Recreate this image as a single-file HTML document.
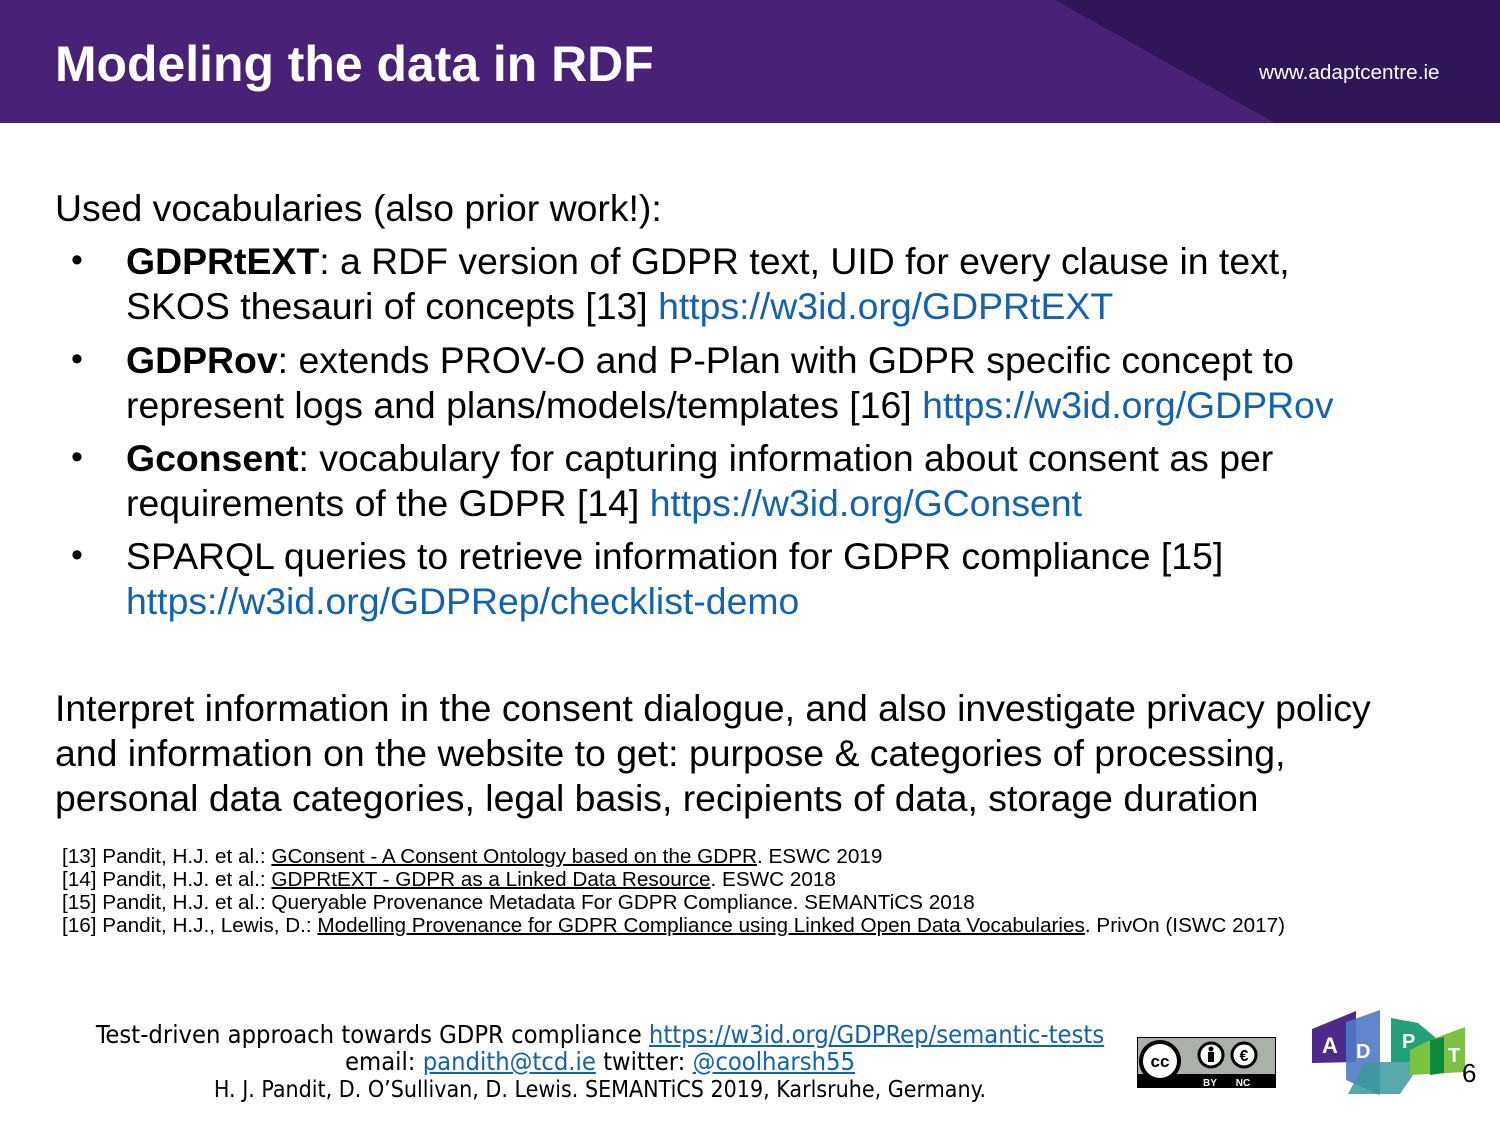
<!DOCTYPE html>
<html><head><meta charset="utf-8"><style>
*{margin:0;padding:0}
body{width:1500px;height:1125px;position:relative;background:#fff;font-family:"Liberation Sans",sans-serif;overflow:hidden;color:#000}
.hdr{position:absolute;left:0;top:0;width:1500px;height:123px;background:#472277}
.t{position:absolute;left:55px;top:35px;font-size:49.9px;font-weight:bold;color:#fff;white-space:nowrap}
.url{position:absolute;left:1259px;top:61px;font-size:20.7px;color:#fff}
.p{position:absolute;font-size:37.4px;white-space:nowrap;line-height:45px}
.b{position:absolute;left:71px;font-size:34px}
.l{color:#1262b3}
.fn{position:absolute;left:62px;font-size:20px;line-height:23px;white-space:nowrap;transform:scaleX(1.035);transform-origin:left}
.ft{position:absolute;left:80px;width:1040px;top:1021px;text-align:center;font-family:"DejaVu Sans Condensed","DejaVu Sans",sans-serif;font-stretch:condensed;font-size:25.3px;line-height:27px;white-space:nowrap}
.ft u{color:#1262b3}
</style></head><body>
<div class="hdr"><svg width="1500" height="123" style="position:absolute;left:0;top:0"><polygon points="1055,0 1500,0 1500,123 1275,123" fill="#2e1659"/></svg></div>
<div class="t">Modeling the data in RDF</div>
<div class="url">www.adaptcentre.ie</div>

<div class="p" style="left:55px;top:186px">Used vocabularies (also prior work!):</div>
<div class="b" style="top:241px">•</div>
<div class="p" style="left:126px;top:239px"><b>GDPRtEXT</b>: a RDF version of GDPR text, UID for every clause in text,<br>SKOS thesauri of concepts [13] <span class="l">https://w3id.org/GDPRtEXT</span></div>
<div class="b" style="top:340px">•</div>
<div class="p" style="left:126px;top:338px"><b>GDPRov</b>: extends PROV-O and P-Plan with GDPR specific concept to<br>represent logs and plans/models/templates [16] <span class="l">https://w3id.org/GDPRov</span></div>
<div class="b" style="top:438px">•</div>
<div class="p" style="left:126px;top:436px"><b>Gconsent</b>: vocabulary for capturing information about consent as per<br>requirements of the GDPR [14] <span class="l">https://w3id.org/GConsent</span></div>
<div class="b" style="top:536px">•</div>
<div class="p" style="left:126px;top:534px">SPARQL queries to retrieve information for GDPR compliance [15]<br><span class="l">https://w3id.org/GDPRep/checklist-demo</span></div>

<div class="p" style="left:55px;top:686px">Interpret information in the consent dialogue, and also investigate privacy policy<br>and information on the website to get: purpose &amp; categories of processing,<br>personal data categories, legal basis, recipients of data, storage duration</div>

<div class="fn" style="top:846px">[13] Pandit, H.J. et al.: <u>GConsent - A Consent Ontology based on the GDPR</u>. ESWC 2019</div>
<div class="fn" style="top:869px">[14] Pandit, H.J. et al.: <u>GDPRtEXT - GDPR as a Linked Data Resource</u>. ESWC 2018</div>
<div class="fn" style="top:892px">[15] Pandit, H.J. et al.: Queryable Provenance Metadata For GDPR Compliance. SEMANTiCS 2018</div>
<div class="fn" style="top:915px">[16] Pandit, H.J., Lewis, D.: <u>Modelling Provenance for GDPR Compliance using Linked Open Data Vocabularies</u>. PrivOn (ISWC 2017)</div>

<div class="ft">Test-driven approach towards GDPR compliance <u>https://w3id.org/GDPRep/semantic-tests</u><br>email: <u>pandith@tcd.ie</u> twitter: <u>@coolharsh55</u><br><span style="font-size:23px">H. J. Pandit, D. O’Sullivan, D. Lewis. SEMANTiCS 2019, Karlsruhe, Germany.</span></div>

<svg style="position:absolute;left:1137px;top:1037px" width="139" height="51">
<rect x="0.5" y="0.5" width="138" height="50" fill="#abb1aa" stroke="#000"/>
<rect x="0" y="37" width="139" height="14" fill="#000"/>
<circle cx="23" cy="24" r="19" fill="#fff" stroke="#000" stroke-width="4"/>
<text x="23" y="30" font-size="17" font-weight="bold" text-anchor="middle" font-family="Liberation Sans">cc</text>
<circle cx="74" cy="18" r="12" fill="#fff" stroke="#000" stroke-width="3"/>
<circle cx="74" cy="12" r="2.5"/><rect x="71" y="15" width="6" height="10"/>
<circle cx="107" cy="18" r="12" fill="#fff" stroke="#000" stroke-width="3"/>
<text x="107" y="24" font-size="16" font-weight="bold" text-anchor="middle">€</text>
<text x="73" y="49" font-size="10" fill="#fff" font-weight="bold" text-anchor="middle">BY</text>
<text x="106" y="49" font-size="10" fill="#fff" font-weight="bold" text-anchor="middle">NC</text>
</svg>
<svg style="position:absolute;left:1310px;top:1000px" width="160" height="95">
<polygon points="2,29 46,11 46,62 2,63" fill="#4b2a8a"/>
<polygon points="36,22 70,10 70,95 36,80" fill="#4f7ac5" opacity="0.9"/>
<polygon points="55,62 112,62 90,94 38,94" fill="#3a9a9a" opacity="0.85"/>
<polygon points="81,18 108,23 126,38 126,62 81,62" fill="#21a07a"/>
<polygon points="100,50 120,40 155,27 155,72 100,75" fill="#7cc242"/>
<polygon points="120,40 134,37 134,73 120,75" fill="#0d8a3c"/>
<text x="12" y="53" font-size="22" font-weight="bold" fill="#fff">A</text>
<text x="46" y="58" font-size="20" font-weight="bold" fill="#fff">D</text>
<text x="92" y="48" font-size="20" font-weight="bold" fill="#fff">P</text>
<text x="138" y="62" font-size="20" font-weight="bold" fill="#fff">T</text>
</svg>
<div style="position:absolute;left:1462px;top:1058px;font-size:26px">6</div>
</body></html>
